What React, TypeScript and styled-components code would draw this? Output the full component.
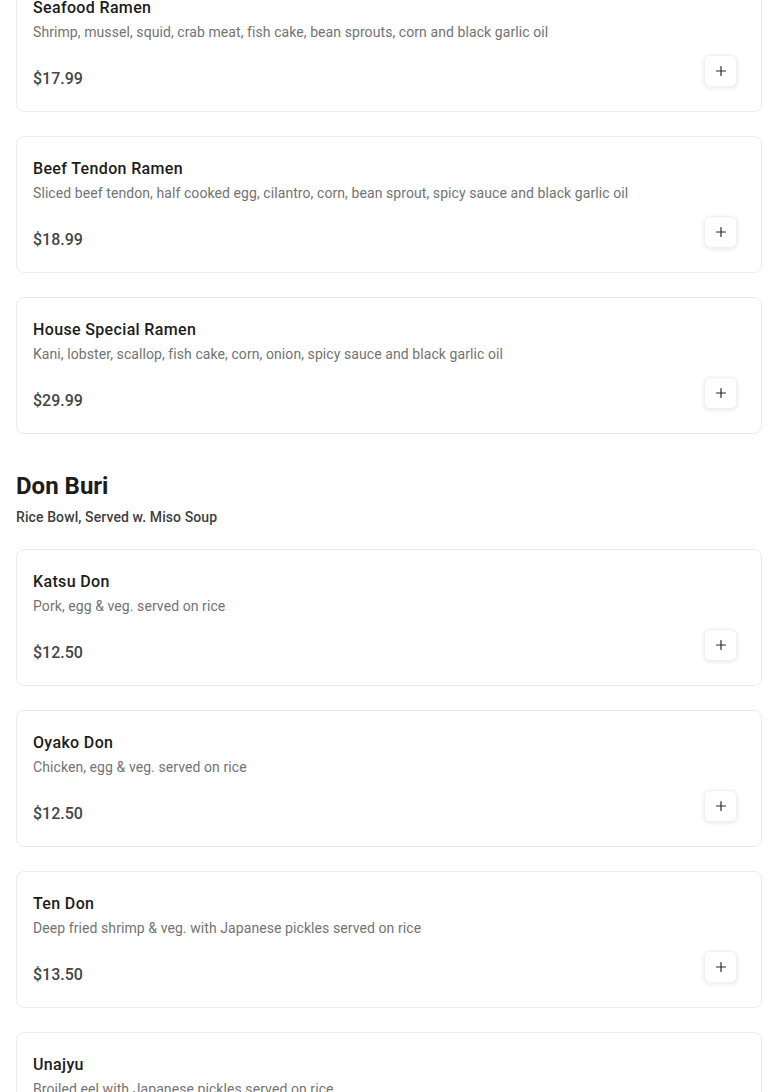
import React from "react";
import styled, { createGlobalStyle } from "styled-components";

const GlobalStyle = createGlobalStyle`
  html, body {
    margin: 0;
    padding: 0;
    background: #ffffff;
    font-family: Roboto, "Noto Sans", Arial, sans-serif;
    -webkit-font-smoothing: antialiased;
  }
  * { box-sizing: border-box; }
`;

const Page = styled.main`
  padding: 0 16px 40px;
  margin-top: -25px;
`;

const Section = styled.section`
  display: flex;
  flex-direction: column;
`;

const SectionHeader = styled.header`
  margin: 36px 0 22px;
`;

const SectionTitle = styled.h2`
  margin: 0;
  font-size: 24px;
  line-height: 32px;
  font-weight: 700;
  color: #1c1c1c;
`;

const SectionSubtitle = styled.p`
  margin: 5px 0 0;
  font-size: 14px;
  line-height: 20px;
  font-weight: 500;
  letter-spacing: 0.1px;
  color: #3f3f3f;
`;

const CardList = styled.div`
  display: flex;
  flex-direction: column;
  gap: 24px;
`;

const Card = styled.article`
  display: flex;
  background: #ffffff;
  border: 1px solid #ebebeb;
  border-radius: 8px;
  padding: 20px 16px;
`;

const Info = styled.div`
  flex: 1;
  display: flex;
  flex-direction: column;
  min-width: 0;
`;

const ItemName = styled.h3`
  margin: 0;
  font-size: 16px;
  line-height: 24px;
  font-weight: 500;
  letter-spacing: 0.35px;
  color: #1c1c1c;
`;

const ItemDesc = styled.p`
  margin: 2px 0 0;
  font-size: 14px;
  line-height: 20px;
  font-weight: 400;
  letter-spacing: 0.08px;
  color: #737373;
`;

const Price = styled.span`
  margin-top: 25px;
  font-size: 16px;
  line-height: 24px;
  font-weight: 500;
  color: #454545;
`;

const AddButton = styled.button`
  align-self: flex-end;
  margin: 0 8px 4px 0;
  width: 33px;
  height: 32px;
  padding: 0;
  display: flex;
  align-items: center;
  justify-content: center;
  background: #ffffff;
  border: 1px solid #f1f1f1;
  border-radius: 6px;
  box-shadow: 0 1px 4px rgba(0, 0, 0, 0.1);
  cursor: pointer;
  color: #2b2b2b;
`;

const PlusIcon = () => (
  <svg width="12" height="12" viewBox="0 0 12 12" fill="none" aria-hidden="true">
    <path d="M6 1.5v9M1.5 6h9" stroke="currentColor" strokeWidth="1.2" strokeLinecap="round" />
  </svg>
);

type Item = { name: string; desc: string; price: string };

const ramen: Item[] = [
  {
    name: "Seafood Ramen",
    desc: "Shrimp, mussel, squid, crab meat, fish cake, bean sprouts, corn and black garlic oil",
    price: "$17.99",
  },
  {
    name: "Beef Tendon Ramen",
    desc: "Sliced beef tendon, half cooked egg, cilantro, corn, bean sprout, spicy sauce and black garlic oil",
    price: "$18.99",
  },
  {
    name: "House Special Ramen",
    desc: "Kani, lobster, scallop, fish cake, corn, onion, spicy sauce and black garlic oil",
    price: "$29.99",
  },
];

const donBuri: Item[] = [
  { name: "Katsu Don", desc: "Pork, egg & veg. served on rice", price: "$12.50" },
  { name: "Oyako Don", desc: "Chicken, egg & veg. served on rice", price: "$12.50" },
  { name: "Ten Don", desc: "Deep fried shrimp & veg. with Japanese pickles served on rice", price: "$13.50" },
  { name: "Unajyu", desc: "Broiled eel with Japanese pickles served on rice", price: "$18.99" },
];

const MenuCard = ({ item }: { item: Item }) => (
  <Card>
    <Info>
      <ItemName>{item.name}</ItemName>
      <ItemDesc>{item.desc}</ItemDesc>
      <Price>{item.price}</Price>
    </Info>
    <AddButton aria-label={`Add ${item.name}`}>
      <PlusIcon />
    </AddButton>
  </Card>
);

export default function App() {
  return (
    <>
      <GlobalStyle />
      <Page>
        <Section>
          <CardList>
            {ramen.map((it) => (
              <MenuCard key={it.name} item={it} />
            ))}
          </CardList>
        </Section>
        <Section>
          <SectionHeader>
            <SectionTitle>Don Buri</SectionTitle>
            <SectionSubtitle>Rice Bowl, Served w. Miso Soup</SectionSubtitle>
          </SectionHeader>
          <CardList>
            {donBuri.map((it) => (
              <MenuCard key={it.name} item={it} />
            ))}
          </CardList>
        </Section>
      </Page>
    </>
  );
}
